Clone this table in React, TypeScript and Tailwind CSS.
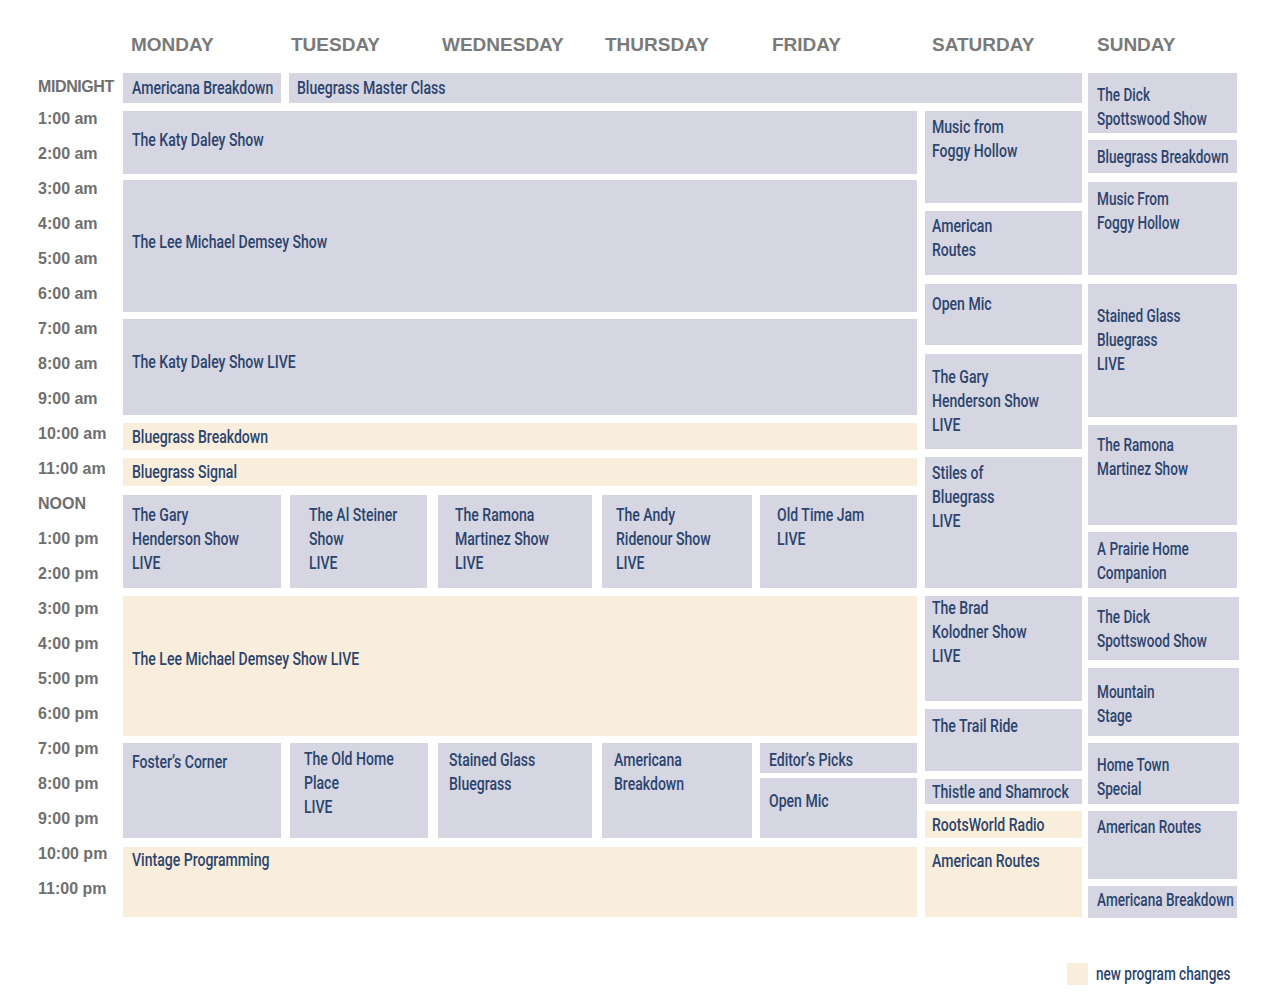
import { FC, ReactNode } from 'react';

interface IBlockProps {
  className: string;
  children: ReactNode;
  cream?: boolean;
  tight?: boolean;
}

// the schedule uses a narrow gothic face; no condensed font is installed,
// so Roboto medium is squeezed horizontally instead
const Narrow: FC<{ children: ReactNode; tight?: boolean }> = ({ children, tight }) => (
  <span
    className={`inline-block origin-top-left whitespace-pre font-['Roboto','Liberation_Sans',sans-serif] font-medium ${
      tight ? 'scale-x-[0.755]' : 'scale-x-[0.78]'
    }`}
  >
    {children}
  </span>
);

// one program slot; size, margins and text offset come in through className
const Block: FC<IBlockProps> = ({ className, children, cream, tight }) => {
  return (
    <div
      className={`min-w-0 shrink-0 text-[18px] leading-[24px] text-[#2b446f] ${
        cream ? 'bg-[#f8eedb]' : 'bg-[#d5d6e1]'
      } ${className}`}
    >
      <Narrow tight={tight}>{children}</Narrow>
    </div>
  );
};

const days = [
  { name: 'MONDAY', cls: 'w-[160px]' },
  { name: 'TUESDAY', cls: 'w-[151px]' },
  { name: 'WEDNESDAY', cls: 'w-[163px]' },
  { name: 'THURSDAY', cls: 'w-[167px]' },
  { name: 'FRIDAY', cls: 'w-[160px]' },
  { name: 'SATURDAY', cls: 'w-[165px]' },
  { name: 'SUNDAY', cls: 'w-[120px]' },
];

const hours = [
  '1:00 am',
  '2:00 am',
  '3:00 am',
  '4:00 am',
  '5:00 am',
  '6:00 am',
  '7:00 am',
  '8:00 am',
  '9:00 am',
  '10:00 am',
  '11:00 am',
  'NOON',
  '1:00 pm',
  '2:00 pm',
  '3:00 pm',
  '4:00 pm',
  '5:00 pm',
  '6:00 pm',
  '7:00 pm',
  '8:00 pm',
  '9:00 pm',
  '10:00 pm',
  '11:00 pm',
];

const App: FC = () => {
  return (
    <div className="h-[1000px] w-[1269px] bg-white font-['Liberation_Sans',Arial,sans-serif]">
      {/* day headers */}
      <header className="flex h-[57px] pl-[131px] pt-[33px] text-[19px] font-bold leading-[24px] text-[#7a7a7a]">
        {days.map((d) => (
          <div key={d.name} className={`shrink-0 ${d.cls}`}>
            {d.name}
          </div>
        ))}
      </header>

      <div className="mt-[16px] flex pl-[38px]">
        {/* time labels */}
        <div className="flex w-[85px] shrink-0 flex-col text-[16px] font-bold text-[#6f6f6f]">
          <div className="flex h-[28px] items-center tracking-[-0.4px]">MIDNIGHT</div>
          {hours.map((h) => (
            <div key={h} className="flex h-[35px] items-center">
              {h}
            </div>
          ))}
        </div>

        {/* monday to saturday */}
        <div className="flex w-[959px] shrink-0 flex-col">
          <div className="flex h-[30px]">
            <Block className="w-[158px] pl-[9px] pt-[3px]">Americana Breakdown</Block>
            <Block className="ml-[8px] flex-1 pl-[8px] pt-[3px]">Bluegrass Master Class</Block>
          </div>

          <div className="mt-[8px] flex">
            <div className="flex w-[794px] shrink-0 flex-col">
              <Block className="h-[63px] pl-[9px] pt-[17px]">The Katy Daley Show</Block>
              <Block className="mt-[6px] h-[132px] pl-[9px] pt-[50px]">The Lee Michael Demsey Show</Block>
              <Block className="mt-[7px] h-[96px] pl-[9px] pt-[31px]">The Katy Daley Show LIVE</Block>
              <Block cream className="mt-[8px] h-[27px] pl-[9px] pt-[2px]">
                Bluegrass Breakdown
              </Block>
              <Block cream className="mt-[8px] h-[28px] pl-[9px] pt-[2px]">
                Bluegrass Signal
              </Block>

              <div className="mt-[9px] flex h-[93px]">
                <Block className="w-[158px] pl-[9px] pt-[8px]">{'The Gary\nHenderson Show\nLIVE'}</Block>
                <Block className="ml-[9px] w-[137px] pl-[19px] pt-[8px]">{'The Al Steiner\nShow\nLIVE'}</Block>
                <Block className="ml-[11px] w-[154px] pl-[17px] pt-[8px]">{'The Ramona\nMartinez Show\nLIVE'}</Block>
                <Block className="ml-[10px] w-[150px] pl-[14px] pt-[8px]">{'The Andy\nRidenour Show\nLIVE'}</Block>
                <Block className="ml-[8px] flex-1 pl-[17px] pt-[8px]">{'Old Time Jam\nLIVE'}</Block>
              </div>

              <Block cream className="mt-[8px] h-[140px] pl-[9px] pt-[51px]">
                The Lee Michael Demsey Show LIVE
              </Block>

              <div className="mt-[7px] flex h-[95px]">
                <Block className="w-[158px] pl-[9px] pt-[7px]">Foster’s Corner</Block>
                <Block className="ml-[9px] w-[138px] pl-[14px] pt-[4px]">{'The Old Home\nPlace\nLIVE'}</Block>
                <Block className="ml-[10px] w-[154px] pl-[11px] pt-[5px]">{'Stained Glass\nBluegrass'}</Block>
                <Block className="ml-[10px] w-[150px] pl-[12px] pt-[5px]">{'Americana\nBreakdown'}</Block>
                <div className="ml-[8px] flex min-w-0 flex-1 flex-col">
                  <Block className="h-[30px] pl-[9px] pt-[5px]">Editor’s Picks</Block>
                  <Block className="mt-[5px] flex-1 pl-[9px] pt-[11px]">Open Mic</Block>
                </div>
              </div>

              <Block cream className="mt-[9px] h-[70px] pl-[9px] pt-[1px]">
                Vintage Programming
              </Block>
            </div>

            {/* saturday */}
            <div className="ml-[8px] flex w-[157px] shrink-0 flex-col">
              <Block className="h-[92px] pl-[7px] pt-[4px]">{'Music from\nFoggy Hollow'}</Block>
              <Block className="mt-[8px] h-[64px] pl-[7px] pt-[3px]">{'American\nRoutes'}</Block>
              <Block className="mt-[9px] h-[61px] pl-[7px] pt-[8px]">Open Mic</Block>
              <Block className="mt-[9px] h-[95px] pl-[7px] pt-[11px]">{'The Gary\nHenderson Show\nLIVE'}</Block>
              <Block className="mt-[8px] h-[131px] pl-[7px] pt-[4px]">{'Stiles of\nBluegrass\nLIVE'}</Block>
              <Block className="mt-[8px] h-[105px] pl-[7px] pt-0">{'The Brad\nKolodner Show\nLIVE'}</Block>
              <Block className="mt-[8px] h-[62px] pl-[7px] pt-[5px]">The Trail Ride</Block>
              <Block className="mt-[8px] h-[25px] pl-[7px] pt-[1px]">Thistle and Shamrock</Block>
              <Block cream className="mt-[7px] h-[27px] pl-[7px] pt-[2px]">
                RootsWorld Radio
              </Block>
              <Block cream className="mt-[9px] h-[70px] pl-[7px] pt-[2px]">
                American Routes
              </Block>
            </div>
          </div>
        </div>

        {/* sunday */}
        <div className="ml-[6px] flex w-[151px] shrink-0 flex-col">
          <Block tight className="h-[60px] w-[149px] pl-[9px] pt-[10px]">{'The Dick\nSpottswood Show'}</Block>
          <Block tight className="mt-[7px] h-[33px] w-[149px] pl-[9px] pt-[5px]">Bluegrass Breakdown</Block>
          <Block tight className="mt-[9px] h-[93px] w-[149px] pl-[9px] pt-[5px]">{'Music From\nFoggy Hollow'}</Block>
          <Block tight className="mt-[9px] h-[133px] w-[149px] pl-[9px] pt-[20px]">{'Stained Glass\nBluegrass\nLIVE'}</Block>
          <Block tight className="mt-[8px] h-[100px] w-[149px] pl-[9px] pt-[8px]">{'The Ramona\nMartinez Show'}</Block>
          <Block tight className="mt-[7px] h-[56px] w-[149px] pl-[9px] pt-[5px]">{'A Prairie Home\nCompanion'}</Block>
          <Block tight className="mt-[9px] h-[63px] w-[151px] pl-[9px] pt-[8px]">{'The Dick\nSpottswood Show'}</Block>
          <Block tight className="mt-[8px] h-[68px] w-[151px] pl-[9px] pt-[12px]">{'Mountain\nStage'}</Block>
          <Block tight className="mt-[7px] h-[61px] w-[151px] pl-[9px] pt-[10px]">{'Home Town\nSpecial'}</Block>
          <Block tight className="mt-[7px] h-[68px] w-[149px] pl-[9px] pt-[4px]">American Routes</Block>
          <Block tight className="mt-[7px] h-[32px] w-[149px] pl-[9px] pt-[2px]">Americana Breakdown</Block>
        </div>
      </div>

      {/* legend */}
      <div className="mt-[44px] flex items-center justify-end pr-[40px]">
        <div className="h-[22px] w-[21px] bg-[#f8eedb]" />
        <div className="ml-[8px] w-[133px] text-[18px] leading-[24px] text-[#2b446f]">
          <Narrow tight>new program changes</Narrow>
        </div>
      </div>
    </div>
  );
};

export default App;
